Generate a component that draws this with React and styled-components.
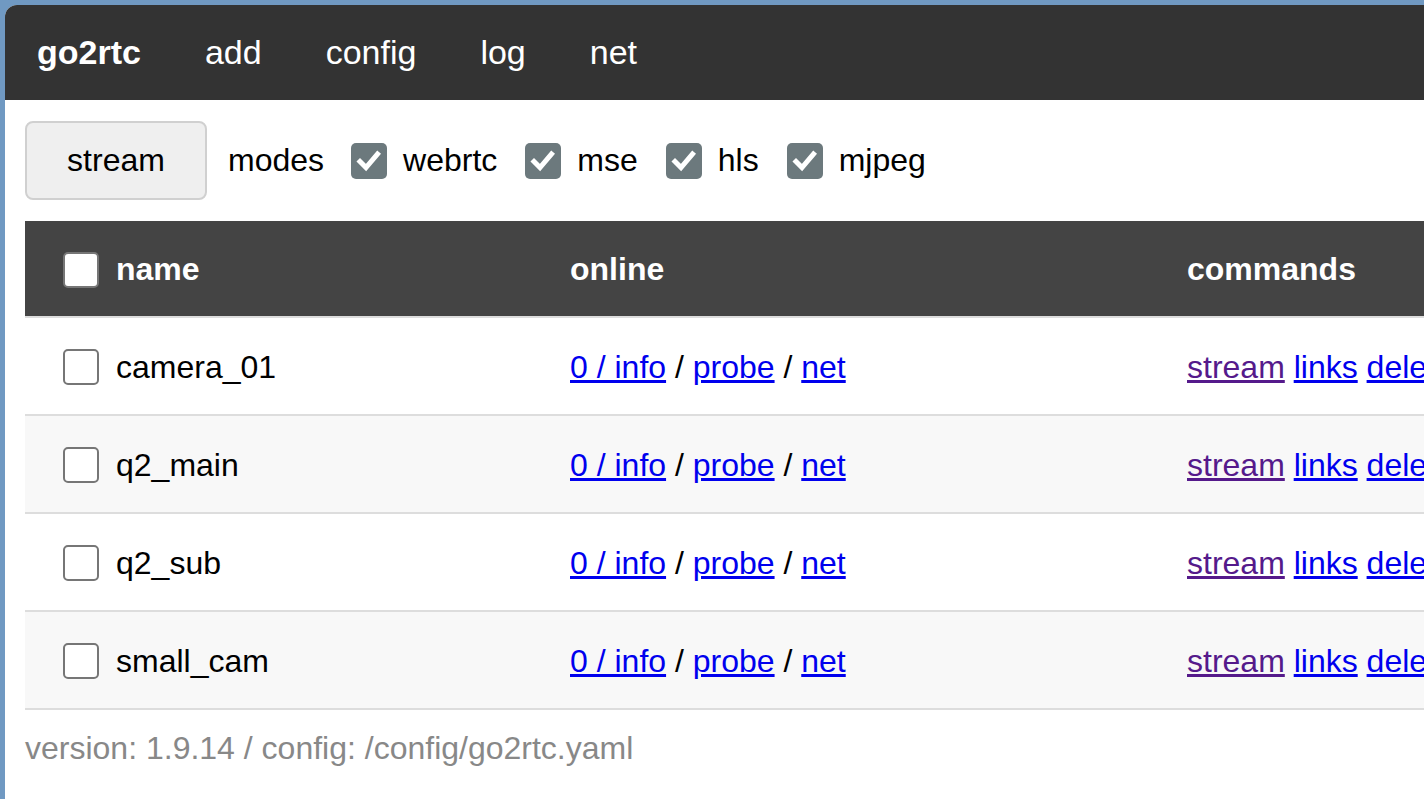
import React from "react";
import styled, { createGlobalStyle } from "styled-components";

const streams = ["camera_01", "q2_main", "q2_sub", "small_cam"];
const modes = ["webrtc", "mse", "hls", "mjpeg"];

function Check({ checked }) {
	return (
		<Box $checked={checked}>
			{checked && (
				<svg width="26" height="26" viewBox="0 0 26 26">
					<path
						d="M4 13.5 L10 19.5 L21.5 6"
						fill="none"
						stroke="#fff"
						strokeWidth="5"
						strokeLinecap="square"
					/>
				</svg>
			)}
		</Box>
	);
}

function App() {
	return (
		<>
			<GlobalStyle />
			<Frame>
				<Window>
					<Nav>
						<NavUl>
							<NavLi>
								<NavA href="#" $brand>
									go2rtc
								</NavA>
							</NavLi>
							<NavLi>
								<NavA href="#">add</NavA>
							</NavLi>
							<NavLi>
								<NavA href="#">config</NavA>
							</NavLi>
							<NavLi>
								<NavA href="#">log</NavA>
							</NavLi>
							<NavLi>
								<NavA href="#">net</NavA>
							</NavLi>
						</NavUl>
					</Nav>

					<Main>
						<Toolbar>
							<StreamButton>stream</StreamButton>
							<ModesLabel>modes</ModesLabel>
							{modes.map((m) => (
								<ModeItem key={m}>
									<Check checked />
									<span>{m}</span>
								</ModeItem>
							))}
						</Toolbar>

						<Table>
							<colgroup>
								<col style={{ width: 513 }} />
								<col style={{ width: 617 }} />
								<col style={{ width: 560 }} />
							</colgroup>
							<thead>
								<tr>
									<Th>
										<NameCell>
											<Check />
											<span>name</span>
										</NameCell>
									</Th>
									<Th>online</Th>
									<Th>commands</Th>
								</tr>
							</thead>
							<tbody>
								{streams.map((s, i) => (
									<Row key={s} $odd={i % 2 === 1}>
										<Td>
											<NameCell>
												<Check />
												<span>{s}</span>
											</NameCell>
										</Td>
										<Td>
											<Link href="#">0 / info</Link> /{" "}
											<Link href="#">probe</Link> /{" "}
											<Link href="#">net</Link>
										</Td>
										<Td>
											<Link href="#" $visited>
												stream
											</Link>{" "}
											<Link href="#">links</Link>{" "}
											<Link href="#">delete</Link>
										</Td>
									</Row>
								))}
							</tbody>
						</Table>

						<Footer>
							version: 1.9.14 / config: /config/go2rtc.yaml
						</Footer>
					</Main>
				</Window>
			</Frame>
		</>
	);
}

export default App;

const GlobalStyle = createGlobalStyle`
	html, body {
		margin: 0;
		padding: 0;
		background: #7099c2;
	}
	body {
		font-family: "Liberation Sans", Arial, sans-serif;
		font-size: 32px;
		color: #000;
		overflow: hidden;
	}
`;

const Frame = styled.div`
	padding: 5px 0 0 5px;
	height: 799px;
	box-sizing: border-box;
`;

const Window = styled.div`
	background: #fff;
	height: 100%;
	border-top-left-radius: 12px;
	overflow: hidden;
`;

const Nav = styled.nav`
	background: #333;
`;

const NavUl = styled.ul`
	display: flex;
	list-style: none;
	margin: 0;
	padding: 0;
`;

const NavLi = styled.li``;

const NavA = styled.a`
	display: block;
	padding: 28px 32px;
	color: #fff;
	font-size: 34px;
	line-height: 39px;
	text-decoration: none;
	font-weight: ${(p) => (p.$brand ? "bold" : "normal")};
`;

const Main = styled.main`
	padding: 21px 0 0 20px;
`;

const Toolbar = styled.div`
	display: flex;
	align-items: center;
	height: 79px;
	margin-bottom: 21px;
`;

const StreamButton = styled.button`
	width: 182px;
	height: 79px;
	box-sizing: border-box;
	background: #efefef;
	border: 2px solid #d0d0d0;
	border-radius: 8px;
	font-family: inherit;
	font-size: 32px;
	color: #000;
	margin-right: 21px;
	padding: 0;
`;

const ModesLabel = styled.span`
	margin-right: 27px;
`;

const ModeItem = styled.label`
	display: flex;
	align-items: center;
	gap: 16px;
	margin-right: 28px;
`;

const Box = styled.span`
	display: inline-flex;
	align-items: center;
	justify-content: center;
	flex: none;
	width: 36px;
	height: 36px;
	box-sizing: border-box;
	border-radius: 5px;
	background: ${(p) => (p.$checked ? "#6c797d" : "#fff")};
	border: ${(p) => (p.$checked ? "none" : "2px solid #767676")};
`;

const Table = styled.table`
	border-collapse: collapse;
	table-layout: fixed;
	width: 1690px;
	text-align: left;
`;

const Th = styled.th`
	background: #444;
	color: #fff;
	font-weight: bold;
	height: 96px;
	padding: 2px 32px 0;
	box-sizing: border-box;
	border-bottom: 2px solid #ddd;
`;

const Row = styled.tr`
	background: ${(p) => (p.$odd ? "#f8f8f8" : "#fff")};
`;

const Td = styled.td`
	height: 98px;
	padding: 2px 32px 0;
	box-sizing: border-box;
	border-bottom: 2px solid #ddd;
	white-space: nowrap;
`;

const NameCell = styled.div`
	display: flex;
	align-items: center;
	gap: 17px;
	padding-left: 6px;
`;

const Link = styled.a`
	color: ${(p) => (p.$visited ? "#551a8b" : "#0000ee")};
	text-decoration: underline;
`;

const Footer = styled.div`
	color: #888;
	margin-top: 20px;
	line-height: 37px;
`;
